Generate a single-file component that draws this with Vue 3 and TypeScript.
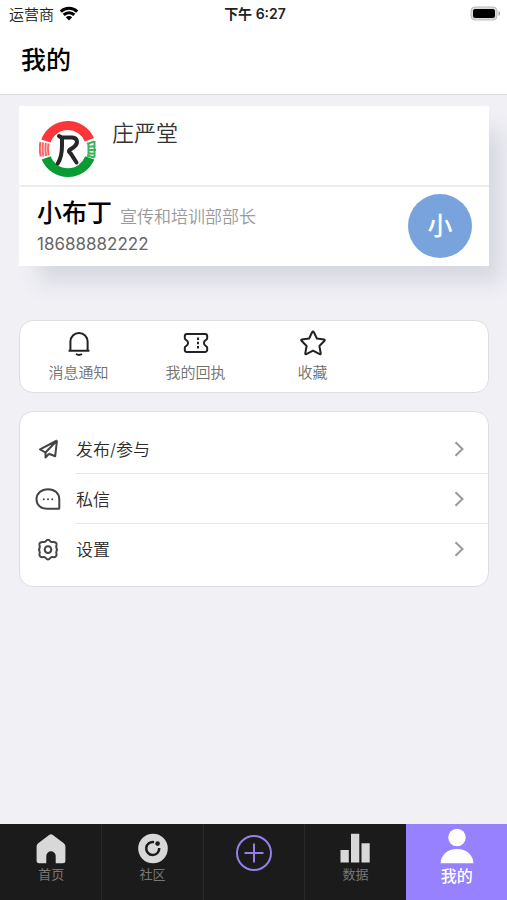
<script setup lang="ts">
import { ref } from 'vue'

interface Item {
  id: string
  label: string
}

const shortcuts: Item[] = [
  { id: 'bell', label: '消息通知' },
  { id: 'ticket', label: '我的回执' },
  { id: 'star', label: '收藏' },
]

const links: Item[] = [
  { id: 'send', label: '发布/参与' },
  { id: 'message', label: '私信' },
  { id: 'settings', label: '设置' },
]

const tabs: Item[] = [
  { id: 'home', label: '首页' },
  { id: 'community', label: '社区' },
  { id: 'add', label: '' },
  { id: 'data', label: '数据' },
  { id: 'mine', label: '我的' },
]

const activeTab = ref('mine')
</script>

<template>
  <div class="page">
    <header class="top">
      <div class="status">
        <div class="carrier">
          <span>运营商</span>
          <svg class="wifi" viewBox="0 0 20 15" aria-hidden="true">
            <path d="M1.800 5.600a11.800 11.800 0 0 1 16.400 0M4.700 8.900a7.700 7.700 0 0 1 10.600 0" />
            <path class="solid" d="M10 14.400 6.800 11.200a4.600 4.600 0 0 1 6.400 0z" />
          </svg>
        </div>
        <time class="clock">下午 6:27</time>
        <svg class="battery" viewBox="0 0 31 15" aria-hidden="true">
          <rect class="shell" x="1" y="1" width="26" height="13" rx="4" />
          <rect class="charge" x="3" y="3" width="22" height="9" rx="2" />
          <path class="cap" d="M28.500 5v5c2.200-.8 2.200-4.200 0-5z" />
        </svg>
      </div>
      <h1 class="title">我的</h1>
    </header>

    <main class="content">
      <section class="profile">
        <div class="org">
          <svg class="logo" viewBox="0 0 58 58" aria-hidden="true">
            <path class="red" d="M2.300 19.500A28.500 28.500 0 0 1 55 18L45.800 21.500A18.300 18.300 0 0 0 11.500 22.500z" />
            <path class="green" d="M2.700 39.500A28.500 28.500 0 0 0 55.300 39.500L46.300 36.300A18.500 18.500 0 0 1 11.700 36.300z" />
            <path class="bars red-line" d="M1.500 22Q0 29 1.800 36.500M4.200 22.500Q2.700 29 4.500 36.500M7 23Q5.700 29 7.200 36M9.600 23.500Q8.500 29 9.700 35.500" />
            <path class="bars green-line" d="M48 24l7.500-2.500M48.500 27l8-1M48.500 30h8.500M48.500 33l8 1M48 35.500l7.500 2M49.500 23v13M55.500 21v16.500" />
            <path class="mark" d="M20 16l3 2v7.500c0 8-.8 12.500-4.200 18M23 17.500h9.500c6.500 0 7 6 2.500 9.500l-4.500 3c-1.300 1.200-.2 2 1 3.200l6 9.300" />
          </svg>
          <h2 class="org-name">庄严堂</h2>
        </div>
        <div class="person">
          <div class="details">
            <div class="identity">
              <strong class="name">小布丁</strong>
              <span class="role">宣传和培训部部长</span>
            </div>
            <span class="phone">18688882222</span>
          </div>
          <span class="avatar">小</span>
        </div>
      </section>

      <section class="shortcuts">
        <button v-for="item in shortcuts" :key="item.id" class="shortcut" type="button">
          <svg class="line-icon" viewBox="0 0 28 28" aria-hidden="true">
            <template v-if="item.id === 'bell'">
              <path d="M3.600 21.800h20.800M5.400 21.500V12.500a8.600 8.600 0 0 1 17.200 0v9M11 25q3 1.800 6 0" />
            </template>
            <template v-else-if="item.id === 'ticket'">
              <path d="M5 5h18a2.200 2.200 0 0 1 2.200 2.200v2c0 .9-.5 1.400-1.500 1.900a3.300 3.300 0 0 0 0 5.800c1 .5 1.500 1 1.500 1.900v2A2.200 2.200 0 0 1 23 23H5a2.200 2.200 0 0 1-2.200-2.200v-2c0-.9.5-1.400 1.500-1.900a3.300 3.300 0 0 0 0-5.800c-1-.5-1.500-1-1.500-1.900v-2A2.200 2.200 0 0 1 5 5z" />
              <path d="M16 8.500V11M16 12.800v2.500M16 17v2.500" />
            </template>
            <template v-else>
              <path d="M14 2.500q.6 0 .9.700l3 6.300 7.200 1q1.200.3.400 1.300l-5.100 5.200 1.300 7.300q.1 1.200-1 .8L14 21.700l-6.700 3.400q-1.100.4-1-.8l1.300-7.300-5.100-5.200q-.8-1 .4-1.300l7.200-1 3-6.300q.3-.7.9-.7z" />
            </template>
          </svg>
          <span>{{ item.label }}</span>
        </button>
      </section>

      <nav class="links" aria-label="我的">
        <a v-for="item in links" :key="item.id" class="link" href="#">
          <svg class="link-icon" viewBox="0 0 26 26" aria-hidden="true">
            <path v-if="item.id === 'send'" d="M22 4.500 5 13.300l5.500 3.200M22 4.500l-1.800 15.700-6.200-2.500M22 4.500 10.500 16.500v5L14 17.700" />
            <template v-else-if="item.id === 'message'">
              <path d="M13 3.300C6.500 3.300 1.500 7.300 1.500 13.200c0 5.700 4.500 9.600 10.500 9.600h11.500a.8.800 0 0 0 .8-.8V13.500c0-6.200-4.500-10.200-11.300-10.200z" />
              <path class="dots" d="M8.800 13.300h.01M13 13.300h.01M17.200 13.300h.01" />
            </template>
            <template v-else>
              <path d="M13 3.800q1.200 0 2 1.200.8 1.200 2.500 1.100 2-.3 3.200.5 1.200 1 .8 2.500-.6 1.800 0 3 .9 1.500 0 3-.6 1.200 0 3 .4 1.500-.8 2.500-1.200.8-3.200.5-1.700-.1-2.500 1.100-.8 1.200-2 1.200t-2-1.200q-.8-1.200-2.500-1.100-2 .3-3.200-.5-1.200-1-.8-2.500.6-1.800 0-3-.9-1.500 0-3 .6-1.200 0-3-.4-1.500.8-2.500 1.200-.8 3.200-.5 1.700.1 2.500-1.100.8-1.200 2-1.200z" />
              <circle cx="13" cy="13.600" r="3.300" />
            </template>
          </svg>
          <span class="link-body">
            <span>{{ item.label }}</span>
            <svg class="chevron" viewBox="0 0 10 16" aria-hidden="true">
              <path d="M1.500 1.200 8.500 8l-7 6.800" />
            </svg>
          </span>
        </a>
      </nav>
    </main>

    <nav class="tabs" aria-label="主导航">
      <button
        v-for="tab in tabs"
        :key="tab.id"
        type="button"
        :class="['tab', { active: tab.id === activeTab }]"
        :aria-label="tab.label || '发布'"
        @click="activeTab = tab.id"
      >
        <svg v-if="tab.id === 'home'" class="tab-icon" viewBox="0 0 32 32" aria-hidden="true">
          <path d="M14.500 1.800q1.500-1 3 0l11.300 8.400q1.600 1.200 1.600 3.200V28q0 2.200-2.500 2.200h-7.200V23a4.700 4.700 0 0 0-9.400 0v7.200H4.100q-2.500 0-2.500-2.200V13.400q0-2 1.600-3.200z" />
        </svg>
        <svg v-else-if="tab.id === 'community'" class="tab-icon" viewBox="0 0 32 32" aria-hidden="true">
          <circle cx="16" cy="15.500" r="14.800" />
          <path class="cut-line" d="M17 9.200a6.500 6.500 0 1 0 5.200 5.800" />
          <circle class="cut" cx="20.600" cy="10.600" r="2.300" />
        </svg>
        <svg v-else-if="tab.id === 'add'" class="add-icon" viewBox="0 0 38 38" aria-hidden="true">
          <circle cx="19" cy="20" r="17" />
          <path d="M19 10.500v19M9.500 20h19" />
        </svg>
        <svg v-else-if="tab.id === 'data'" class="tab-icon" viewBox="0 0 32 32" aria-hidden="true">
          <path d="M1.500 17h8.300v12.500H1.500zM12 .8h8.300v28.700H12zM22.500 10.200h8.200v19.300h-8.200z" />
        </svg>
        <svg v-else class="person-icon" viewBox="0 0 34 36" aria-hidden="true">
          <circle cx="17" cy="9.500" r="8.700" />
          <path d="M.6 35.300C.8 27 7.500 21 17 21s16.200 6 16.400 14.300z" />
        </svg>
        <span v-if="tab.label">{{ tab.label }}</span>
      </button>
    </nav>
  </div>
</template>

<style>
body {
  margin: 0;
}
</style>

<style scoped>
.page {
  display: flex;
  flex-direction: column;
  min-height: 100vh;
  background: #f0f0f5;
  color: #333;
  font-family: Inter, "Noto Sans CJK SC", sans-serif;
}

button {
  border: 0;
  padding: 0;
  background: none;
  font: inherit;
  cursor: pointer;
}

svg {
  display: block;
  flex: none;
  fill: none;
}

.top {
  border-bottom: 1px solid #dcdcde;
  background: #fff;
}

.status {
  display: grid;
  grid-template-columns: 1fr auto 1fr;
  align-items: center;
  height: 26px;
  padding: 0 6px 0 9px;
  color: #222;
  font-size: 15px;
}

.carrier {
  display: flex;
  align-items: center;
  gap: 5px;
  font-weight: 350;
}

.wifi {
  width: 20px;
  height: 15px;
  stroke: #000;
  stroke-width: 3;
}

.wifi .solid {
  fill: #000;
  stroke: none;
}

.clock {
  font-size: 14px;
  font-weight: 600;
}

.battery {
  justify-self: end;
  width: 31px;
  height: 15px;
}

.shell {
  fill: #ddd;
  stroke: #bbb;
}

.charge {
  fill: #000;
}

.cap {
  fill: #aaa;
}

.title {
  margin: 0;
  padding: 16px 21px;
  color: #000;
  font-size: 25px;
  font-weight: 500;
  line-height: 36px;
}

.content {
  flex: 1;
  padding: 11px 18px 20px 19px;
}

.profile {
  background: #fff;
  box-shadow: 16px 20px 20px -4px #d6d8e0;
}

.org {
  display: flex;
  gap: 15px;
  height: 60px;
  padding: 14px 20px 5px;
  border-bottom: 2px solid #ededef;
}

.logo {
  width: 58px;
  height: 58px;
}

.red {
  fill: #fb3638;
}

.green {
  fill: #089c32;
}

.bars {
  stroke-width: 2;
}

.red-line {
  stroke: #fb6264;
}

.green-line {
  stroke: #3cb35b;
}

.mark {
  stroke: #272727;
  stroke-width: 4;
  stroke-linecap: round;
  stroke-linejoin: round;
}

.org-name {
  margin: 0;
  font-size: 22px;
  font-weight: 350;
  line-height: 26px;
}

.person {
  display: flex;
  align-items: center;
  justify-content: space-between;
  height: 78px;
  padding: 0 17px 1px 18px;
}

.identity {
  display: flex;
  align-items: flex-end;
  gap: 8px;
  line-height: 36px;
}

.name {
  color: #000;
  font-size: 25px;
  font-weight: 500;
}

.role {
  color: #999;
  font-size: 17px;
  font-weight: 350;
  line-height: 28px;
}

.phone {
  display: block;
  color: #666;
  font-size: 17px;
  line-height: 26px;
}

.avatar {
  display: grid;
  place-items: center;
  width: 64px;
  height: 64px;
  border-radius: 50%;
  background: #78a3dc;
  color: #fff;
  font-size: 25px;
  font-weight: 500;
  line-height: 60px;
}

.shortcuts,
.links {
  border: 1px solid #dedee2;
  border-radius: 14px;
  background: #fff;
}

.shortcuts {
  display: grid;
  grid-template-columns: repeat(4, 1fr);
  margin-top: 54px;
  padding: 8px 0;
}

.shortcut {
  display: flex;
  flex-direction: column;
  align-items: center;
  gap: 5px;
  color: #707070;
  font-size: 15px;
  font-weight: 350;
  line-height: 22px;
}

.line-icon {
  width: 28px;
  height: 28px;
  stroke: #222;
  stroke-width: 2;
  stroke-linejoin: round;
}

.links {
  margin-top: 18px;
  padding: 12px 0;
}

.link {
  display: flex;
  align-items: center;
  gap: 15px;
  padding-left: 15px;
  color: #2b2b2b;
  font-size: 17px;
  font-weight: 350;
  text-decoration: none;
}

.link-icon {
  width: 26px;
  height: 26px;
  stroke: #444;
  stroke-width: 2;
  stroke-linejoin: round;
}

.dots {
  stroke-linecap: round;
}

.link-body {
  display: flex;
  flex: 1;
  align-items: center;
  justify-content: space-between;
  height: 49px;
  padding-right: 24px;
  border-bottom: 1px solid #e6e6e8;
}

.link:last-child .link-body {
  border-color: transparent;
}

.chevron {
  width: 10px;
  height: 16px;
  stroke: #999;
  stroke-width: 2;
}

.tabs {
  display: grid;
  grid-template-columns: repeat(5, 1fr);
  height: 76px;
  background: #1b1b1b;
}

.tab {
  display: flex;
  flex-direction: column;
  align-items: center;
  padding-top: 9px;
  border-left: 1px solid #292929;
  color: #777;
  font-size: 13px;
  line-height: 18px;
}

.tab:first-child {
  border-color: transparent;
}

.tab-icon {
  width: 32px;
  height: 32px;
  fill: #d8d8d8;
}

.cut {
  fill: #1b1b1b;
}

.cut-line {
  fill: none;
  stroke: #1b1b1b;
  stroke-width: 2.5;
}

.add-icon {
  width: 38px;
  height: 38px;
  stroke: #967fea;
  stroke-width: 2;
}

.person-icon {
  width: 34px;
  height: 36px;
  fill: #fff;
}

.tab.active {
  gap: 1px;
  padding-top: 4px;
  border-color: #9881ff;
  background: #9881ff;
  color: #fff;
  font-size: 16px;
  font-weight: 500;
  line-height: 22px;
}
</style>
